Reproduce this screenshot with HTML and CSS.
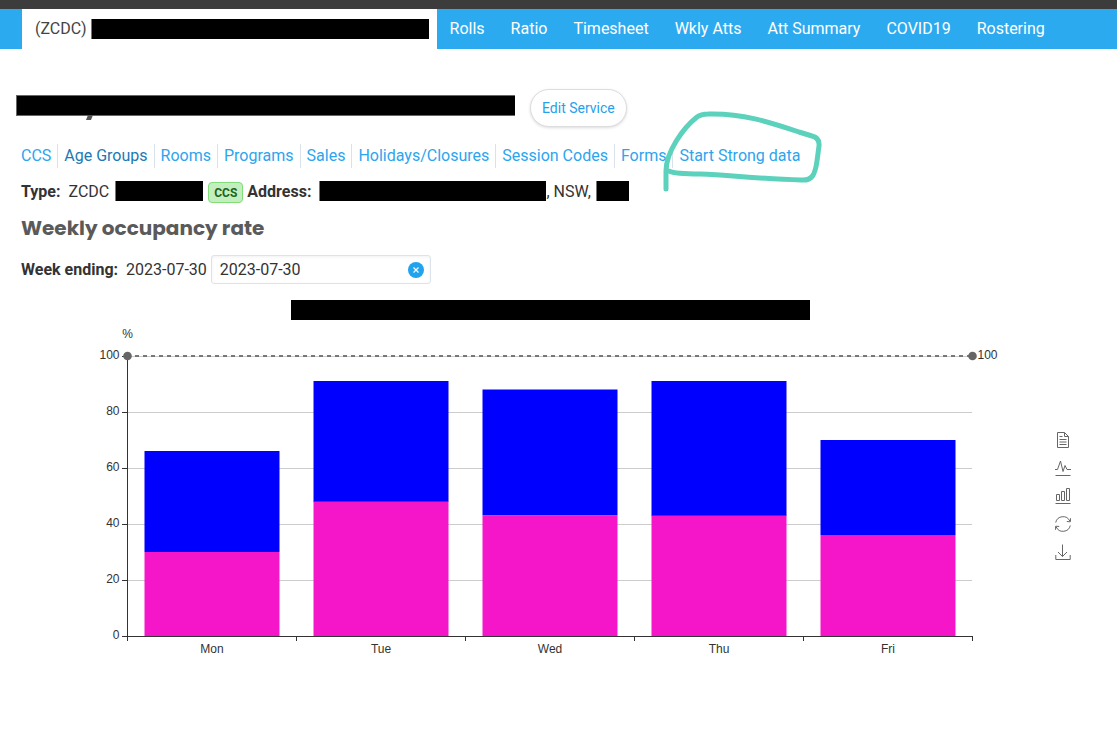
FILE: index.html
```html
<!DOCTYPE html>
<html lang="en">
<head>
<meta charset="utf-8">
<title>Weekly occupancy rate</title>
<link rel="stylesheet" href="styles.css">
</head>
<body>
<div class="topbar"></div>
<nav class="tabs">
  <a class="tab current" href="#"><span>(ZCDC)</span><span class="redact edge service"></span></a>
  <a class="tab" href="#">Rolls</a>
  <a class="tab" href="#">Ratio</a>
  <a class="tab" href="#">Timesheet</a>
  <a class="tab" href="#">Wkly Atts</a>
  <a class="tab" href="#">Att Summary</a>
  <a class="tab" href="#">COVID19</a>
  <a class="tab" href="#">Rostering</a>
</nav>
<main>
  <header class="title-row">
    <div class="redact name"></div>
    <button class="edit" type="button">Edit Service</button>
  </header>
  <nav class="sections">
    <a href="#">CCS</a>
    <a class="active" href="#">Age Groups</a>
    <a href="#">Rooms</a>
    <a href="#">Programs</a>
    <a href="#">Sales</a>
    <a href="#">Holidays/Closures</a>
    <a href="#">Session Codes</a>
    <a href="#">Forms</a>
    <a class="starred" href="#">Start Strong data
      <svg class="loop" viewBox="0 0 170 90" aria-hidden="true"><path d="M11 84V66C11 47 28 23 42 12Q46 9 53 9C87 8 114 17 144 27L157 31Q165 33 164 41L162 56C160 70 157 76 146 75C105 74 74 70 45 69Q20 69 14 66"/></svg></a>
  </nav>
  <div class="details">
    <b>Type:</b><span class="type">ZCDC</span><span class="redact edge kind"></span><span class="badge">CCS</span>
    <b>Address:</b><span class="redact edge street"></span><span class="state">, NSW,</span><span class="redact edge postcode"></span>
  </div>
  <h2>Weekly occupancy rate</h2>
  <div class="week">
    <label for="week">Week ending:</label><span class="date">2023-07-30</span>
    <div class="field">
      <input id="week" type="text" value="2023-07-30">
      <button class="clear" type="button" aria-label="Clear"><svg viewBox="0 0 16 16"><path d="M5.500 5.500l5 5M10.500 5.500l-5 5"/></svg></button>
    </div>
  </div>
</main>
<div class="redact chart-title"></div>
<section class="chart-area">
  <svg class="chart" viewBox="0 0 1040 340" role="img" aria-label="Weekly occupancy rate by day">
    <g class="grid"><path d="M127 36.500H972M127 92.500H972M127 148.500H972M127 204.500H972M127 260.500H972"/></g>
    <g class="blue">
      <rect x="144.500" y="131" width="135" height="101"/><rect x="313.500" y="61" width="135" height="121"/><rect x="482.500" y="69.500" width="135" height="126"/><rect x="651.500" y="61" width="135" height="135"/><rect x="820.500" y="120" width="135" height="95"/>
    </g>
    <g class="pink">
      <rect x="144.500" y="232" width="135" height="84"/><rect x="313.500" y="181.500" width="135" height="135"/><rect x="482.500" y="195.500" width="135" height="121"/><rect x="651.500" y="195.500" width="135" height="121"/><rect x="820.500" y="215" width="135" height="101"/>
    </g>
    <path class="axis" d="M127.500 36V321M122 36.500h5M122 92.500h5M122 148.500h5M122 204.500h5M122 260.500h5M122 316.500H973M296.500 316v5M465.500 316v5M634.500 316v5M803.500 316v5M972.500 316v5"/>
    <path class="limit" d="M127 36H972"/>
    <g class="dots"><circle cx="127.500" cy="36" r="4.300"/><circle cx="972.500" cy="36" r="4.300"/></g>
    <g class="labels">
      <text class="mid" x="127.500" y="18">%</text>
      <text class="end" x="119.500" y="39">100</text><text class="end" x="119.500" y="95">80</text><text class="end" x="119.500" y="151">60</text><text class="end" x="119.500" y="207">40</text><text class="end" x="119.500" y="263">20</text><text class="end" x="119.500" y="319">0</text>
      <text x="977.500" y="39">100</text>
      <text class="mid" x="212" y="333">Mon</text><text class="mid" x="381" y="333">Tue</text><text class="mid" x="550" y="333">Wed</text><text class="mid" x="719" y="333">Thu</text><text class="mid" x="888" y="333">Fri</text>
    </g>
  </svg>
  <div class="tools">
    <button type="button" aria-label="Data view"><svg viewBox="0 0 16 16"><path d="M2.500.5h7l4 4v11h-11zM9.500.5v4h4M4.500 4.500h3M4.500 7.500h7M4.500 10h7M4.500 12.500h7"/></svg></button>
    <button type="button" aria-label="Line chart"><svg viewBox="0 0 16 16"><path d="M0 9.500h2.500L5.500 1 8 11.500 10 5.500 12 9.500h4M.5 15.500h15"/></svg></button>
    <button type="button" aria-label="Bar chart"><svg viewBox="0 0 16 16"><path d="M1.500 6.500h3v6h-3zM6.500 3.500h3v9h-3zM11.500.5h3v12h-3zM.5 15.500h15"/></svg></button>
    <button type="button" aria-label="Restore"><svg viewBox="0 0 16 16"><path d="M.7 6.500A7.500 7.500 0 0 1 14.800 5M15.300 9.500A7.500 7.500 0 0 1 1.200 11M11.800 5.500l3.500.3.5-3.800M4.200 10.500L.7 10.200.2 14"/></svg></button>
    <button type="button" aria-label="Download"><svg viewBox="0 0 16 16"><path d="M7.500.5v12M3 8l4.500 4.500L12 8M.8 11v4.500h14.400V11"/></svg></button>
  </div>
</section>
</body>
</html>
```
FILE: styles.css
```css
* { box-sizing: border-box; }
body { margin: 0; background: #fff; color: #333; font: 16px/24px Roboto, sans-serif; }
a { text-decoration: none; }
button { font-family: inherit; cursor: pointer; }
svg { display: block; }
.topbar { height: 9px; background: #3c3c3c; }
.tabs { display: flex; height: 40px; padding-left: 22px; background: #2caaf0; }
.tab { display: flex; align-items: center; padding: 0 13px; color: #fff; white-space: nowrap; }
.tab.current { padding: 0 8px 0 13px; gap: 4px; background: #fff; color: #444; }
.redact { flex: none; height: 20px; background: #000; }
.redact.edge { border-left: 1px solid #777; }
.service { width: 338px; }
main { padding: 40px 21px 0; }
.title-row { display: flex; align-items: center; gap: 15px; height: 38px; margin-left: -5px; }
.name { position: relative; width: 499px; height: 21px; margin-bottom: 5px; border: 1px solid #666; border-width: 1px 0 1px 1px; }
.name::after { content: ""; position: absolute; left: 70px; top: 19px; width: 5px; height: 5px; background: #555; transform: skewX(-22deg); }
.edit { height: 38px; padding: 0 11px; border: 1px solid #ddd; border-radius: 19px; background: #fff; box-shadow: 0 1px 3px rgba(0, 0, 0, .14); color: #26a0ec; font-size: 14px; }
.sections { display: flex; margin-top: 17px; }
.sections a { padding: 0 6px; border-right: 1px solid #d9e2ec; color: #2ca5ee; white-space: nowrap; }
.sections a:first-child { padding-left: 0; }
.sections a.active { color: #1c79b4; }
.sections a.starred { position: relative; border-right: 0; }
.loop { position: absolute; left: -18px; top: -39px; width: 170px; height: 90px; fill: none; stroke: #5cd1bc; stroke-width: 5; stroke-linecap: round; stroke-linejoin: round; pointer-events: none; }
.details { display: flex; align-items: center; height: 24px; margin-top: 11px; white-space: nowrap; }
.details b, .type, .state { padding-top: 2px; }
.type { margin: 0 6px 0 8px; }
.kind { width: 88px; }
.badge { height: 21px; margin: 2px 4px 0 5px; padding: 0 5px; border: 1px solid #82dc78; border-radius: 4px; background: #c3efc0; color: #1d6419; font-size: 12px; font-weight: 700; line-height: 20px; }
.street { width: 227px; margin-left: 8px; }
.state { margin-right: 5px; }
.postcode { width: 33px; }
h2 { margin: 10px 0 0; color: #5a5a5a; font: 700 20px/30px Poppins, Inter, sans-serif; }
.week { display: flex; align-items: center; margin-top: 12px; }
.week label { font-weight: 700; }
.date { margin: 0 4px 0 8px; }
.field { position: relative; width: 220px; }
.field input { display: block; width: 100%; height: 29px; padding: 0 28px 0 8px; border: 1px solid #dbe3eb; border-radius: 3px; background: #fff; box-shadow: inset 0 1px 3px rgba(0, 0, 0, .06); color: #333; font: inherit; }
.clear { position: absolute; right: 7px; top: 7px; width: 16px; height: 16px; padding: 0; border: 0; border-radius: 50%; background: #22a3ee; }
.clear path { fill: none; stroke: #fff; stroke-width: 1.2; }
.chart-title { width: 519px; max-width: 100%; margin: 16px auto 0; position: relative; right: 8px; }
.chart-area { display: flex; align-items: flex-start; }
.chart { flex: 1; min-width: 0; }
.grid path { stroke: #ccc; }
.blue { fill: #00f; }
.pink { fill: #f516ca; }
.axis { fill: none; stroke: #333; }
.limit { stroke: #777; stroke-width: 2; stroke-dasharray: 4 4; }
.dots { fill: #666; }
.labels { fill: #333; font: 12px "Liberation Sans", Arial, sans-serif; }
.mid { text-anchor: middle; }
.end { text-anchor: end; }
.tools { display: flex; flex-direction: column; gap: 12px; width: 77px; padding: 112px 0 0 15px; }
.tools button { width: 16px; height: 16px; padding: 0; border: 0; background: none; }
.tools path { fill: none; stroke: #666; }
```
